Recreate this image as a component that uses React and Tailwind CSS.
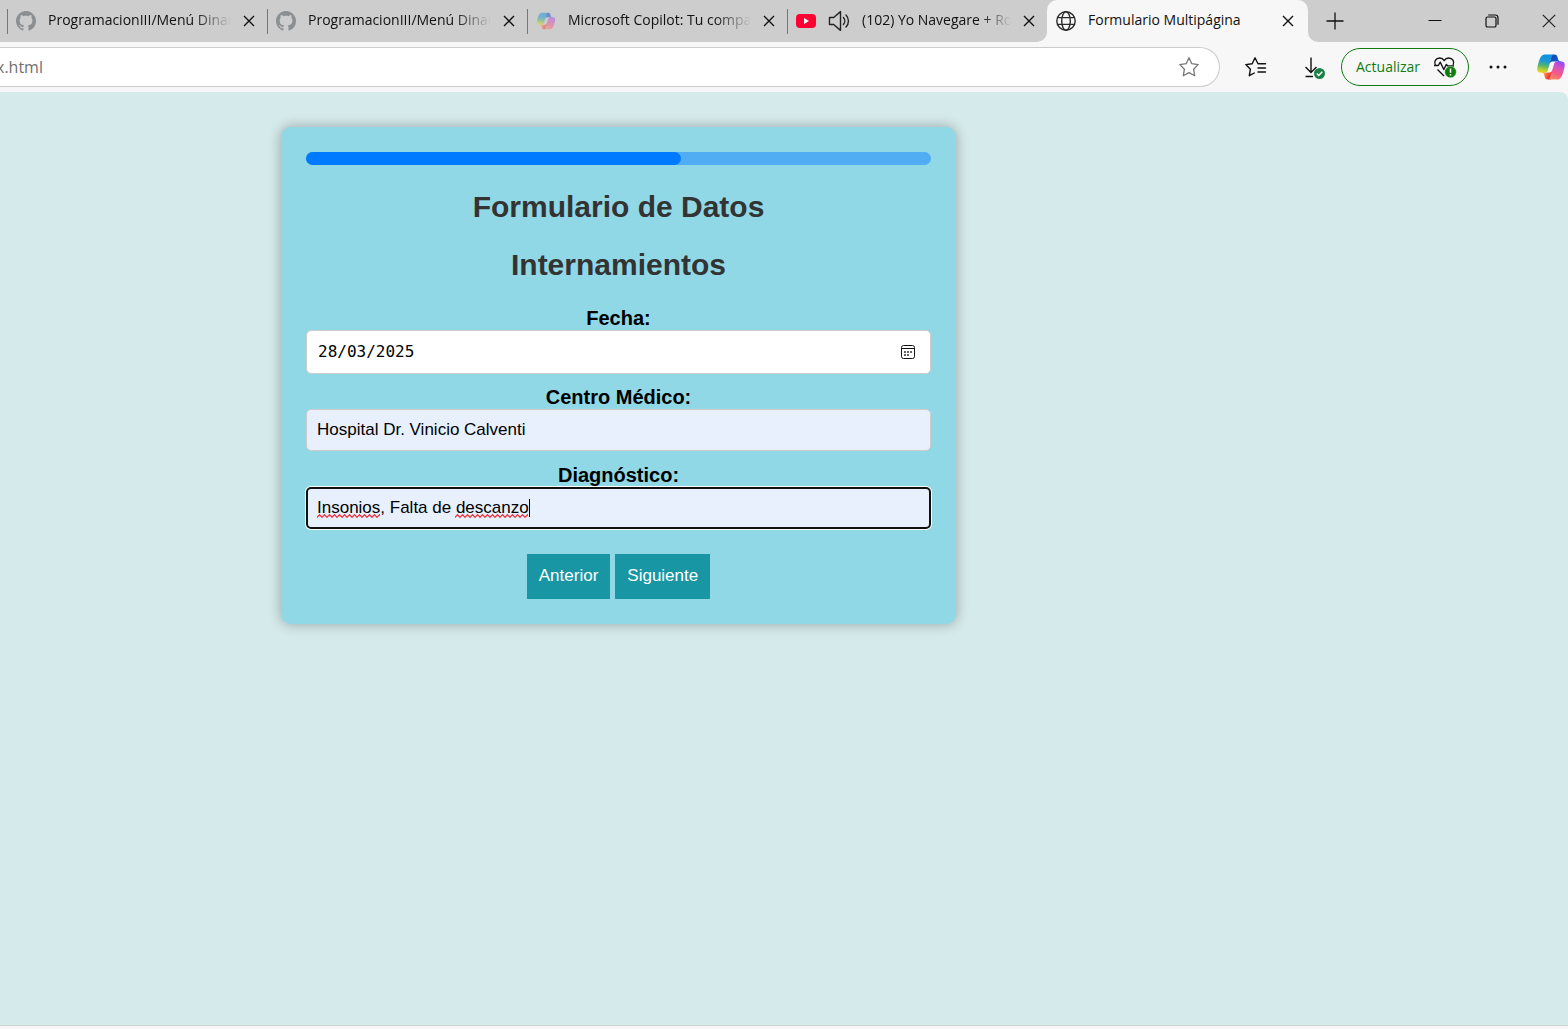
import React from "react";

function CopilotLogo({ className, id }) {
  const g = (n) => `${id}-${n}`;
  const url = (n) => `url(#${id}-${n})`;
  return (
    <svg viewBox="0 1 48 46" className={className} aria-hidden="true">
      <defs>
        <linearGradient id={g("a")} x1="38" y1="14" x2="25" y2="6" gradientUnits="userSpaceOnUse">
          <stop offset="0" stopColor="#0b63ce" />
          <stop offset="1" stopColor="#1b44b1" />
        </linearGradient>
        <linearGradient id={g("b")} x1="10" y1="33" x2="24" y2="42" gradientUnits="userSpaceOnUse">
          <stop offset="0" stopColor="#ffb657" />
          <stop offset="0.5" stopColor="#ff5f3d" />
          <stop offset="1" stopColor="#c02b3c" />
        </linearGradient>
        <linearGradient id={g("c")} x1="16" y1="4" x2="11" y2="33" gradientUnits="userSpaceOnUse">
          <stop offset="0" stopColor="#0d91e1" />
          <stop offset="0.35" stopColor="#1c98d8" />
          <stop offset="0.62" stopColor="#52b471" />
          <stop offset="0.85" stopColor="#b7d332" />
          <stop offset="1" stopColor="#f5cf16" />
        </linearGradient>
        <linearGradient id={g("d")} x1="40" y1="14" x2="27" y2="44" gradientUnits="userSpaceOnUse">
          <stop offset="0" stopColor="#8c48ff" />
          <stop offset="0.35" stopColor="#d552c4" />
          <stop offset="0.65" stopColor="#f2598a" />
          <stop offset="1" stopColor="#ff8a60" />
        </linearGradient>
      </defs>
      <path fill={url("a")} d="M34.14 7.33A4.63 4.63 0 0 0 29.7 4h-1.35a4.63 4.63 0 0 0-4.55 3.8l-2.32 12.6.58-1.96a4.63 4.63 0 0 1 4.42-3.31h7.85l3.3 1.28 3.17-1.28h-.93a4.63 4.63 0 0 1-4.44-3.33L34.14 7.33Z" />
      <path fill={url("b")} d="M14.33 40.66A4.63 4.63 0 0 0 18.78 44h2.87a4.63 4.63 0 0 0 4.63-4.51l.31-12.16-.65 2.23a4.63 4.63 0 0 1-4.42 3.31H13.6l-2.82-1.53-3.06 1.53h.91c2.06 0 3.88 1.36 4.45 3.34l1.25 4.45Z" />
      <path fill={url("c")} d="M29.5 4H13.46C8.88 4 6.13 10.06 4.3 16.11c-2.18 7.18-5.02 16.77 3.2 16.77h6.92c2.07 0 3.89-1.37 4.45-3.36 1.2-4.18 3.28-11.46 4.92-17.01.83-2.83 1.53-5.25 2.6-6.77.6-.84 1.6-1.74 3.11-1.74Z" />
      <path fill={url("d")} d="M18.5 44h16.04c4.58 0 7.33-6.06 9.16-12.11 2.17-7.17 5.01-16.77-3.2-16.77h-6.92a4.63 4.63 0 0 0-4.46 3.37c-1.19 4.18-3.27 11.45-4.91 17-.84 2.83-1.53 5.26-2.6 6.77-.6.84-1.6 1.74-3.11 1.74Z" />
    </svg>
  );
}

function GithubIcon() {
  return (
    <svg viewBox="0 0 16 16" className="size-5 shrink-0 fill-[#8c8f92]" aria-hidden="true">
      <path d="M8 0C3.58 0 0 3.58 0 8c0 3.54 2.29 6.53 5.47 7.59.4.07.55-.17.55-.38 0-.19-.01-.82-.01-1.49-2.01.37-2.53-.49-2.69-.94-.09-.23-.48-.94-.82-1.13-.28-.15-.68-.52-.01-.53.63-.01 1.08.58 1.23.82.72 1.21 1.87.87 2.33.66.07-.52.28-.87.51-1.07-1.78-.2-3.64-.89-3.64-3.95 0-.87.31-1.59.82-2.15-.08-.2-.36-1.02.08-2.12 0 0 .67-.21 2.2.82.64-.18 1.32-.27 2-.27s1.36.09 2 .27c1.53-1.04 2.2-.82 2.2-.82.44 1.1.16 1.92.08 2.12.51.56.82 1.27.82 2.15 0 3.07-1.87 3.75-3.65 3.95.29.25.54.73.54 1.48 0 1.07-.01 1.93-.01 2.2 0 .21.15.46.55.38A8.01 8.01 0 0 0 16 8c0-4.42-3.58-8-8-8Z" />
    </svg>
  );
}

function YoutubeIcon() {
  return (
    <svg viewBox="0 0 20 20" className="size-5 shrink-0" aria-hidden="true">
      <rect x="0" y="3" width="20" height="14" rx="4" fill="#ff0033" />
      <path d="M8 7v6l5-3Z" fill="#fff" />
    </svg>
  );
}

function SpeakerIcon() {
  return (
    <svg viewBox="0 0 22 22" className="size-[22px]" fill="none" stroke="#222" strokeWidth="1.4" strokeLinejoin="round" strokeLinecap="round" aria-hidden="true">
      <path d="M1.5 7.5h4.2L12.5 1.6v18.8l-6.8-5.9H1.5Z" />
      <path d="M15.4 7.6a5 5 0 0 1 0 6.800M18 5a8.6 8.6 0 0 1 0 12" />
    </svg>
  );
}

function GlobeIcon() {
  return (
    <svg viewBox="0 0 20 20" className="size-5 shrink-0" fill="none" stroke="#2b2b2b" strokeWidth="1.4" aria-hidden="true">
      <circle cx="10" cy="10" r="9.2" />
      <ellipse cx="10" cy="10" rx="4.3" ry="9.2" />
      <path d="M1.6 6.6h16.8M1.6 13.4h16.8" />
    </svg>
  );
}

function CloseButton({ label }) {
  return (
    <button type="button" aria-label={label} className="flex size-5 shrink-0 items-center justify-center">
      <svg viewBox="0 0 12 12" className="size-3" stroke="#111" strokeWidth="1.4" aria-hidden="true">
        <path d="m1 1 10 10M11 1 1 11" />
      </svg>
    </button>
  );
}

const tabs = [
  { icon: <GithubIcon />, title: "ProgramacionIII/Menú Dinam" },
  { icon: <GithubIcon />, title: "ProgramacionIII/Menú Dinam" },
  { icon: <CopilotLogo id="tab" className="size-5 shrink-0 opacity-50" />, title: "Microsoft Copilot: Tu compa" },
  { icon: <YoutubeIcon />, title: "(102) Yo Navegare + Ro", audio: true },
];

function Tab({ icon, title, audio }) {
  return (
    <div className="flex h-[25px] w-[260px] min-w-0 items-center border-l border-[#777] px-2">
      {icon}
      {audio && (
        <button type="button" aria-label="Silenciar pestaña" className="ml-3 shrink-0">
          <SpeakerIcon />
        </button>
      )}
      <span className="mr-2 ml-3 min-w-0 flex-1 overflow-hidden pb-0.5 whitespace-nowrap mask-r-from-80% mask-r-to-100%">
        {title}
      </span>
      <CloseButton label="Cerrar pestaña" />
    </div>
  );
}

function TabStrip() {
  return (
    <div className="flex h-[42px] bg-[#f7f7f7] text-sm text-[#111]">
      <div className="flex min-w-0 items-center rounded-br-[10px] bg-[#cdcdcd] pl-[7px]">
        {tabs.map((t, i) => (
          <Tab key={i} {...t} />
        ))}
      </div>
      <div className="flex bg-linear-to-b from-[#cdcdcd] from-50% to-[#f7f7f7] to-50%">
        <div className="flex w-[261px] items-center rounded-t-[10px] bg-[#f7f7f7] pr-2.5 pl-[9px]">
          <GlobeIcon />
          <span className="ml-3 flex-1 pb-0.5 whitespace-nowrap">Formulario Multipágina</span>
          <CloseButton label="Cerrar pestaña" />
        </div>
      </div>
      <div className="flex flex-1 items-center justify-between rounded-bl-[10px] bg-[#cdcdcd] pr-3 pl-[18px]">
        <button type="button" aria-label="Nueva pestaña">
          <svg viewBox="0 0 18 18" className="size-[18px]" stroke="#111" strokeWidth="1.3" aria-hidden="true">
            <path d="M9 .5v17M.5 9h17" />
          </svg>
        </button>
        <div className="flex items-center gap-[43px]">
          <button type="button" aria-label="Minimizar">
            <svg viewBox="0 0 14 14" className="size-3.5" stroke="#111" aria-hidden="true">
              <path d="M.5 6.5h13" />
            </svg>
          </button>
          <button type="button" aria-label="Restaurar">
            <svg viewBox="0 0 14 14" className="size-3.5" fill="none" stroke="#111" strokeWidth="1.2" aria-hidden="true">
              <rect x="1" y="3" width="10" height="10" rx="1.6" />
              <path d="M3.2 1h7A2.8 2.8 0 0 1 13 3.8v7" />
            </svg>
          </button>
          <button type="button" aria-label="Cerrar ventana">
            <svg viewBox="0 0 14 14" className="size-3.5" stroke="#222" strokeWidth="1.2" aria-hidden="true">
              <path d="m.8.8 12.4 12.4M13.2.8.8 13.2" />
            </svg>
          </button>
        </div>
      </div>
    </div>
  );
}

function Toolbar() {
  return (
    <div className="flex h-[50px] items-center bg-[#f7f7f7]">
      <div className="flex h-10 min-w-0 flex-1 items-center rounded-r-full border border-l-0 border-[#cbcbcb] bg-white pr-5">
        <input
          aria-label="Barra de direcciones"
          defaultValue="x.html"
          className="-ml-1 min-w-0 flex-1 bg-transparent text-base text-[#6f6f6f] outline-none"
        />
        <button type="button" aria-label="Agregar a favoritos">
          <svg viewBox="0 0 20 20" className="size-5" fill="none" stroke="#777" strokeWidth="1.3" strokeLinejoin="round" aria-hidden="true">
            <path d="m10 .8 2.8 5.9 6.4.9-4.6 4.6 1.1 6.5L10 15.6l-5.7 3.1 1.1-6.5L.8 7.6l6.4-.9Z" />
          </svg>
        </button>
      </div>
      <button type="button" aria-label="Favoritos" className="ml-[25px] shrink-0">
        <svg viewBox="0 0 22 20" className="h-5 w-[22px]" fill="none" stroke="#111" strokeWidth="1.4" strokeLinejoin="round" strokeLinecap="round" aria-hidden="true">
          <path d="M13 6.7 10 .8 7.2 6.7l-6.4.9 4.6 4.6-1.1 6.5 5-2.7M13 6.7h7.5M13 11h7.5M13 15h7.5" />
        </svg>
      </button>
      <button type="button" aria-label="Descargas" className="ml-[37px] shrink-0">
        <svg viewBox="0 0 22 24" className="h-6 w-[22px]" fill="none" aria-hidden="true">
          <path d="M7 2.500v15M1.500 12 7 17.500 12.500 12M1.500 21.500H9" stroke="#111" strokeWidth="1.4" />
          <circle cx="15.500" cy="19" r="6" fill="#f7f7f7" />
          <circle cx="15.500" cy="18.500" r="5.500" fill="#1b8043" />
          <path d="m12.800 18.600 1.900 1.900 3.600-3.700" stroke="#fff" strokeWidth="1.4" />
        </svg>
      </button>
      <button
        type="button"
        className="ml-[15px] flex h-[38px] w-32 shrink-0 items-center justify-between rounded-full border border-[#107c10] pr-[11px] pl-3.5 text-sm text-[#107c10]"
      >
        Actualizar
        <svg viewBox="0 0 24 22" className="h-[22px] w-6" fill="none" aria-hidden="true">
          <path
            d="M2.300 9C.500 5.500 3 2 6.700 2c2.100 0 3.600 1.100 4.500 2.600C12.100 3.100 13.600 2 15.700 2c3.700 0 6.200 3.500 4.400 7M1 9.500h4.300l2-3.300 3.500 7.300 2.500-5 1.500 1.500H21M4.500 13.500l6.500 6.500"
            stroke="#111"
            strokeWidth="1.4"
            strokeLinejoin="round"
          />
          <circle cx="17.500" cy="16" r="5.800" fill="#107c10" stroke="#f7f7f7" strokeWidth=".4" />
          <path d="M17.500 12.500v4.300M17.500 18v1.500" stroke="#fff" strokeWidth="1.500" />
        </svg>
      </button>
      <button type="button" aria-label="Configuración y más" className="ml-5 shrink-0">
        <svg viewBox="0 0 18 4" className="h-1 w-[18px] fill-[#111]" aria-hidden="true">
          <circle cx="2" cy="2" r="1.500" />
          <circle cx="9" cy="2" r="1.500" />
          <circle cx="16" cy="2" r="1.500" />
        </svg>
      </button>
      <button type="button" aria-label="Copilot" className="mr-0.5 ml-[29px] shrink-0">
        <CopilotLogo id="bar" className="size-[30px]" />
      </button>
    </div>
  );
}

function Squiggle({ width, id, className }) {
  return (
    <svg width={width} height="4" className={`absolute ${className}`} aria-hidden="true">
      <defs>
        <pattern id={id} width="5" height="4" patternUnits="userSpaceOnUse">
          <path d="M-1 2.100 0 3.300 2.500.700 5 3.300 6 2.100" fill="none" stroke="#f0222c" strokeWidth="1.200" />
        </pattern>
      </defs>
      <rect width={width} height="4" fill={`url(#${id})`} />
    </svg>
  );
}

const labelClass = "block text-center text-xl leading-6 font-bold text-black";
const fieldClass = "block h-[42px] w-full rounded-[5px] bg-[#e8f0fe] text-[17px] text-black outline-none";

function DataForm() {
  return (
    <form
      onSubmit={(e) => e.preventDefault()}
      className="mt-[35px] ml-[281px] w-[675px] max-w-full rounded-[10px] bg-[#90d8e6] p-[25px] font-['Liberation_Sans',Arial,sans-serif] shadow-[0_0_13px_rgba(0,0,0,0.3)]"
    >
      <div className="h-[13px] rounded-full bg-[#50adf3]">
        <div className="h-full w-3/5 rounded-full bg-[#007bff]" />
      </div>
      <h1 className="mt-[25px] text-center text-[30px] leading-[34px] font-bold text-[#333]">Formulario de Datos</h1>
      <h2 className="mt-6 text-center text-[30px] leading-[34px] font-bold text-[#333]">Internamientos</h2>

      <label htmlFor="fecha" className={`${labelClass} mt-6`}>
        Fecha:
      </label>
      <div className="flex h-11 items-center rounded-[5px] border border-[#ccc] bg-white pr-3.5 pl-[11px]">
        <input
          id="fecha"
          defaultValue="28/03/2025"
          className="min-w-0 flex-1 bg-transparent font-['DejaVu_Sans_Mono',monospace] text-base text-black outline-none"
        />
        <button type="button" aria-label="Mostrar selector de fecha">
          <svg viewBox="0 0 16 16" className="size-4" fill="none" aria-hidden="true">
            <rect x="1.500" y="1.500" width="13" height="13" rx="2" stroke="#111" />
            <path d="M1.500 4.500h13" stroke="#111" />
            <path d="M4 8h2M7 8h2M10 8h2M4 11h2M7 11h2" stroke="#333" strokeWidth="1.600" />
          </svg>
        </button>
      </div>

      <label htmlFor="centro" className={`${labelClass} mt-[11px]`}>
        Centro Médico:
      </label>
      <input
        id="centro"
        defaultValue="Hospital Dr. Vinicio Calventi"
        className={`${fieldClass} border border-[#ccc] px-2.5`}
      />

      <label htmlFor="diagnostico" className={`${labelClass} mt-3`}>
        Diagnóstico:
      </label>
      <div className="relative">
        <input
          id="diagnostico"
          spellCheck={false}
          defaultValue="Insonios, Falta de descanzo"
          className={`${fieldClass} border-2 border-[#101010] px-[9px] ring-1 ring-white`}
        />
        <Squiggle id="squiggle-1" width={63} className="top-[27px] left-[11px]" />
        <Squiggle id="squiggle-2" width={73} className="top-[27px] left-[149px]" />
        <span className="absolute top-3 left-[223px] h-[18px] w-px bg-black" />
      </div>

      <div className="mt-[25px] flex justify-center gap-[5px] text-[17px] text-white">
        <button type="button" className="h-[45px] bg-[#1896a3] px-3 pb-0.5">
          Anterior
        </button>
        <button type="submit" className="h-[45px] bg-[#1896a3] px-3 pb-0.5">
          Siguiente
        </button>
      </div>
    </form>
  );
}

export default function App() {
  return (
    <div className="flex min-h-screen flex-col overflow-hidden bg-[#f7f7f7] font-['Open_Sans','Noto_Sans',sans-serif]">
      <header>
        <TabStrip />
        <Toolbar />
      </header>
      <main className="flex-1 rounded-tr-lg border-b border-[#d2d2d2] bg-[#d5eaeb]">
        <DataForm />
      </main>
      <div className="h-[3px]" />
    </div>
  );
}
